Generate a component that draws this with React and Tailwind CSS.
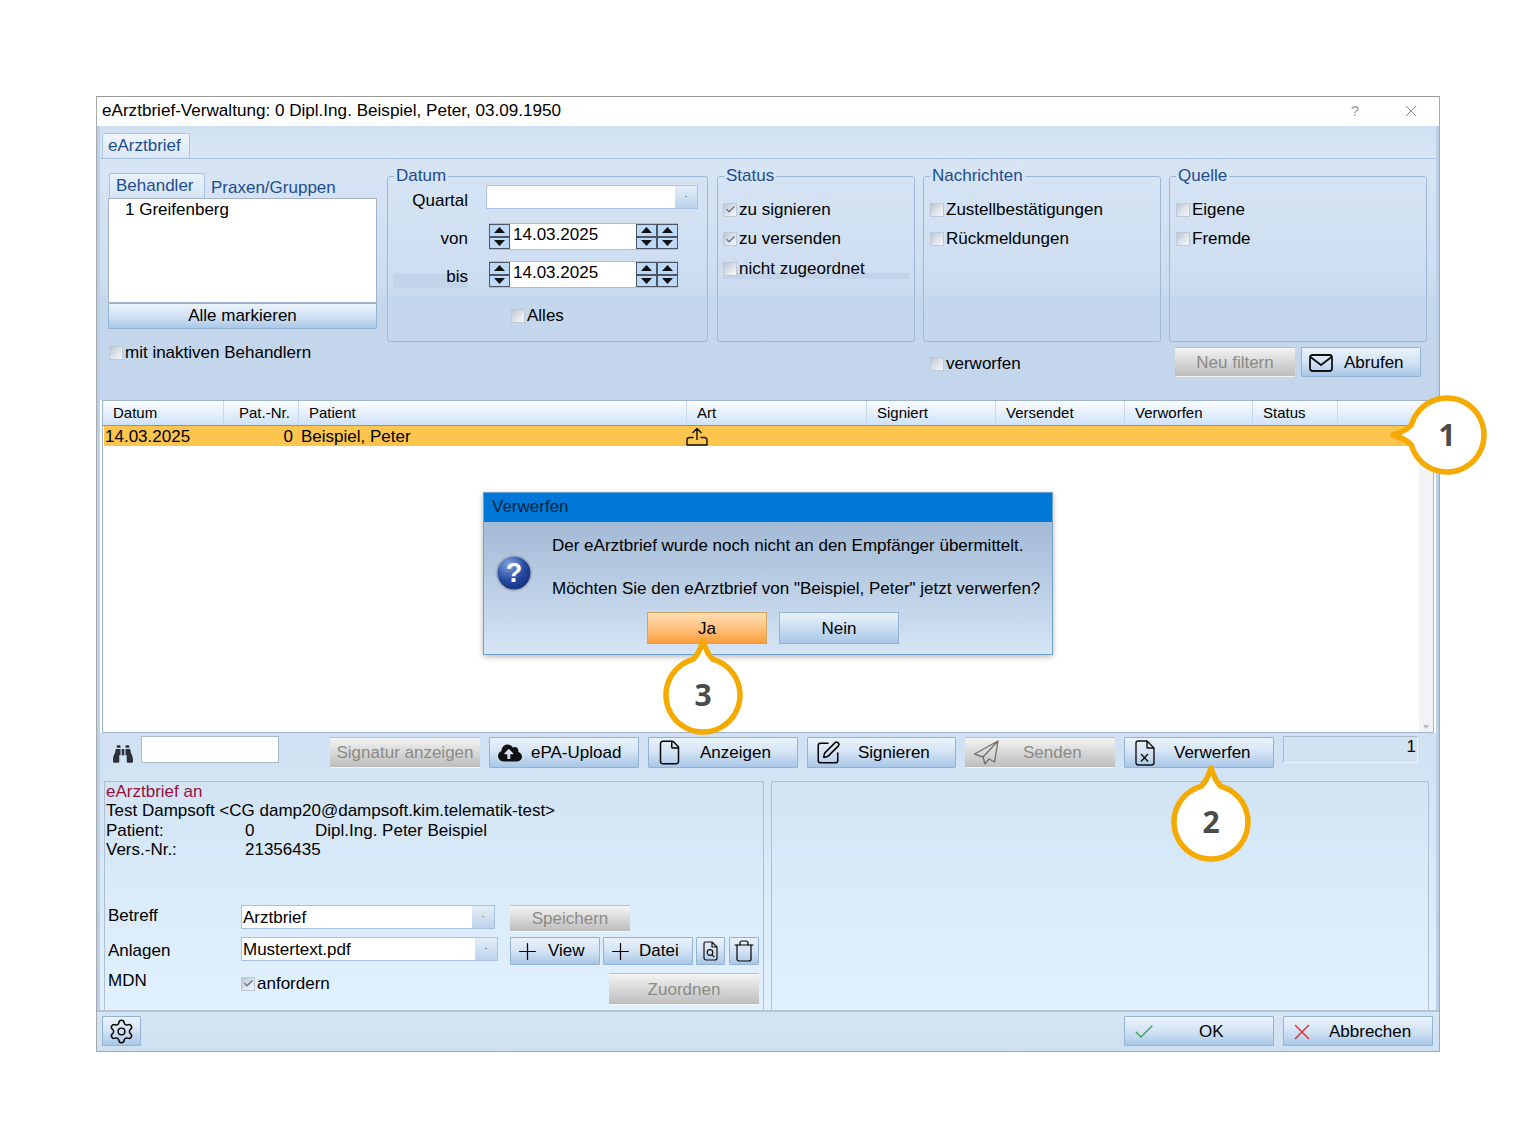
import React from "react";
import { Check, File, Plus, Settings, SquarePen, Trash, X } from "lucide-react";
import { FaBinoculars, FaCloudUploadAlt } from "react-icons/fa";

const Tick = ({ checked }) => (
  <span className="flex h-[14px] w-[14px] shrink-0 items-center justify-center border border-[#bcc9da] bg-gradient-to-br from-[#bcc4d0] via-[#dde2e9] to-[#f7f8fa]">
    {checked && <Check size={11} strokeWidth={3} className="text-[#66768c]" />}
  </span>
);

const CheckRow = ({ label, checked, extra = "" }) => (
  <div className={`flex h-[21px] items-center gap-[2px] ${extra}`}>
    <Tick checked={checked} />
    <span>{label}</span>
  </div>
);

const Btn = ({ children, disabled, className = "" }) => (
  <div
    className={`flex shrink-0 items-center rounded-[1px] border ${
      disabled
        ? "border-transparent bg-gradient-to-b from-[#f4f4f4] to-[#bdbdbd] text-[#8b8b85]"
        : "border-[#93b3d3] bg-gradient-to-b from-[#eaf3fb] via-[#d3e3f4] to-[#a9c7e7] text-black"
    } ${className}`}
  >
    {children}
  </div>
);

const Group = ({ title, className = "", children }) => (
  <fieldset className={`h-[175px] shrink-0 rounded-[3px] border border-[#9db8d9] ${className}`}>
    <legend className="ml-[6px] px-[2px] text-[17px] leading-[18px] text-[#1f4d8f]">{title}</legend>
    {children}
  </fieldset>
);

const Arrow = ({ up }) => (
  <div className="flex flex-1 items-center justify-center border border-[#4d5662] bg-[#bcd9fa]">
    <svg width="11" height="6" viewBox="0 0 11 6">
      <polygon points={up ? "5.5,0 11,6 0,6" : "0,0 11,0 5.5,6"} fill="#111" />
    </svg>
  </div>
);

const Spin = () => (
  <div className="flex h-full w-[21px] shrink-0 flex-col">
    <Arrow up />
    <Arrow />
  </div>
);

const DateField = () => (
  <div className="flex h-[27px] w-[189px] items-stretch border-y border-[#b3bcc8] bg-white">
    <Spin />
    <span className="flex-1 pl-[3px] text-[17px] leading-[22px]">14.03.2025</span>
    <Spin />
    <Spin />
  </div>
);

const Combo = ({ value, className = "" }) => (
  <div className={`flex h-[24px] shrink-0 items-stretch border border-[#a9c3e2] bg-white ${className}`}>
    <span className="flex-1 pl-[1px] leading-[23px]">{value}</span>
    <span className="flex w-[22px] items-center justify-center bg-gradient-to-b from-[#e5eef8] to-[#bcd3ec] pb-[2px] text-[9px] leading-none text-[#333]">·</span>
  </div>
);

const Bubble = ({ n, left, top, rotate = "" }) => (
  <div className="absolute h-[120px] w-[120px]" style={{ left, top }}>
    <svg width="120" height="120" viewBox="-60 -60 120 120" className={rotate}>
      <path
        d="M -10 -35.6 Q -4 -41 0 -54 Q 4 -41 10 -35.6 A 37 37 0 1 1 -10 -35.6 Z"
        fill="#fff"
        stroke="#f5aa00"
        strokeWidth="5.5"
        strokeLinejoin="round"
      />
    </svg>
    <span className="absolute inset-0 -top-[2px] flex items-center justify-center font-['Open_Sans',sans-serif] text-[30px] font-bold text-[#4b4b4b]">
      {n}
    </span>
  </div>
);

const cols = [
  ["Datum", "w-[121px] pl-[10px]"],
  ["Pat.-Nr.", "w-[75px] pl-[15px]"],
  ["Patient", "w-[388px] pl-[10px]"],
  ["Art", "w-[180px] pl-[10px]"],
  ["Signiert", "w-[129px] pl-[10px]"],
  ["Versendet", "w-[129px] pl-[10px]"],
  ["Verworfen", "w-[128px] pl-[10px]"],
  ["Status", "w-[85px] pl-[10px]"],
];

export default function App() {
  return (
    <div className="relative h-[1148px] w-full overflow-hidden bg-white pl-[96px] pt-[96px] font-['Liberation_Sans',Arial,sans-serif] text-[17px] text-black">
      <div className="flex h-[956px] w-[1344px] flex-col border border-[#a5a9ad] border-t-[#9a9a9a]">
        {/* Title bar */}
        <div className="flex h-[29px] shrink-0 items-start bg-white pl-[5px] text-[17.1px] leading-[27px]">
          <span>eArztbrief-Verwaltung: 0 Dipl.Ing. Beispiel, Peter, 03.09.1950</span>
          <span className="ml-auto mr-[42px] text-[15px] text-[#9a9a9a]">?</span>
          <X size={20} strokeWidth={0.9} className="mr-[18px] mt-[4px] text-[#666]" />
        </div>

        {/* Body */}
        <div className="flex min-h-0 flex-1 flex-col">
          <div className="h-[32px] shrink-0 border-x-[3px] border-x-[#bcd1e8] bg-gradient-to-b from-[#cfe0f1] to-[#dae7f5] pl-[2px] pt-[7px]">
            <div className="h-[26px] w-[88px] rounded-t-[2px] border border-b-0 border-[#a9c3e0] bg-gradient-to-b from-[#eef5fc] to-[#d9e7f5] pl-[5px] text-[17px] leading-[24px] text-[#1f4d8f]">
              eArztbrief
            </div>
          </div>

          <div className="flex min-h-0 flex-1 flex-col border-x-[3px] border-x-[#bcd1e8]">
            {/* Filter area */}
            <div className="flex h-[242px] shrink-0 border-t border-[#a9c3e0] bg-[linear-gradient(to_bottom,#d7e5f4_0%,#ccdcf0_56%,#c5d7ed_57%,#c4d6ec_100%)] pl-[8px] pt-[8px]">
              {/* Behandler */}
              <div className="w-[269px] shrink-0 pt-[6px]">
                <div className="flex h-[25px] items-end">
                  <div className="ml-[1px] h-[25px] w-[96px] rounded-t-[2px] border border-b-0 border-[#a9c3e0] bg-gradient-to-b from-[#e9f2fb] to-[#d5e4f4] pl-[6px] leading-[23px] text-[#1f4d8f]">
                    Behandler
                  </div>
                  <div className="ml-[6px] h-[22px] leading-[24px] text-[#1f4d8f]">Praxen/Gruppen</div>
                </div>
                <div className="h-[105px] border border-[#a3b2c6] bg-white pl-[16px] leading-[21px]">1 Greifenberg</div>
                <Btn className="h-[26px] w-full justify-center">Alle markieren</Btn>
                <div className="mt-[13px] flex h-[21px] items-center gap-[2px] pl-[1px]">
                  <Tick />
                  <span>mit inaktiven Behandlern</span>
                </div>
              </div>

              <div className="ml-[10px] w-[1040px] shrink-0">
                <div className="flex">
                  {/* Datum */}
                  <Group title="Datum" className="w-[321px]">
                    <div className="flex h-[24px] items-start">
                      <span className="w-[80px] pt-[5px] text-right leading-[22px]">Quartal</span>
                      <Combo className="ml-[18px] w-[212px]" />
                    </div>
                    <div className="mt-[14px] flex h-[27px]">
                      <span className="w-[80px] pt-[5px] text-right leading-[22px]">von</span>
                      <div className="ml-[21px]">
                        <DateField />
                      </div>
                    </div>
                    <div className="mt-[11px] flex h-[27px]">
                      <span className="ml-[5px] w-[75px] bg-[linear-gradient(to_bottom,transparent_50%,#c3d4ea_50%)] pt-[5px] text-right leading-[22px]">bis</span>
                      <div className="ml-[21px]">
                        <DateField />
                      </div>
                    </div>
                    <CheckRow label="Alles" extra="ml-[123px] mt-[17px]" />
                  </Group>

                  {/* Status */}
                  <Group title="Status" className="ml-[9px] w-[198px]">
                    <div className="flex flex-col gap-[8.5px] pl-[5px] pt-[14px]">
                      <CheckRow label="zu signieren" checked />
                      <CheckRow label="zu versenden" checked />
                      <CheckRow
                        label="nicht zugeordnet"
                        extra="mr-[5px] bg-[linear-gradient(to_bottom,transparent_70%,#c3d4ea_70%)]"
                      />
                    </div>
                  </Group>

                  {/* Nachrichten */}
                  <Group title="Nachrichten" className="ml-[8px] w-[238px]">
                    <div className="flex flex-col gap-[8.5px] pl-[6px] pt-[14px]">
                      <CheckRow label="Zustellbestätigungen" />
                      <CheckRow label="Rückmeldungen" />
                    </div>
                  </Group>

                  {/* Quelle */}
                  <Group title="Quelle" className="ml-[8px] w-[258px]">
                    <div className="flex flex-col gap-[8.5px] pl-[6px] pt-[14px]">
                      <CheckRow label="Eigene" />
                      <CheckRow label="Fremde" />
                    </div>
                  </Group>
                </div>

                <div className="mt-[5px] flex items-start pr-[6px]">
                  <CheckRow label="verworfen" extra="ml-[543px] mt-[6px]" />
                  <Btn disabled className="ml-auto h-[30px] w-[120px] justify-center pt-[1px]">
                    Neu filtern
                  </Btn>
                  <Btn className="ml-[6px] h-[30px] w-[120px] gap-[11px] pl-[7px] pt-[1px]">
                    <svg width="24" height="18" viewBox="0 0 24 18" fill="none" stroke="#111" strokeWidth="1.8">
                      <rect x="1" y="1" width="22" height="16" rx="2.5" />
                      <path d="M1.5 3 L12 11 L22.5 3" />
                    </svg>
                    <span>Abrufen</span>
                  </Btn>
                </div>
              </div>
            </div>

            {/* Table */}
            <div className="mx-[2px] h-[333px] shrink-0 border border-[#9fb4cc] bg-white">
              <div className="flex h-[25px] border-b border-[#8397ad] bg-gradient-to-b from-[#fbfdff] to-[#cfe2f8] text-[15px] leading-[24px]">
                {cols.map(([c, w]) => (
                  <div key={c} className={`${w} shrink-0 border-r border-[#c6d9ee]`}>
                    {c}
                  </div>
                ))}
              </div>
              <div className="relative h-[306px]">
                <div className="ml-[1px] flex h-[20px] bg-[#fcc54e] leading-[22px]">
                  <span className="ml-[1px] w-[138px]">14.03.2025</span>
                  <span className="w-[50px] text-right">0</span>
                  <span className="ml-[8px] w-[385px]">Beispiel, Peter</span>
                  <svg width="22" height="20" viewBox="0 0 22 20" fill="none" stroke="#111" strokeWidth="1.4" strokeLinejoin="round" className="mt-[1px] shrink-0">
                    <path d="M11 13 V1.5 M6.5 6 L11 1.5 L15.5 6 M7.5 10.5 H3.5 A2.5 2.5 0 0 0 1 13 V18 H21 V13 A2.5 2.5 0 0 0 18.5 10.5 H14.5" />
                  </svg>
                </div>
                <div className="absolute bottom-0 right-0 top-[20px] flex w-[14px] items-end justify-center bg-[#f1f3f5] pb-[3px]">
                  <svg width="6" height="4" viewBox="0 0 6 4">
                    <polygon points="0,0 6,0 3,4" fill="#b0bac6" />
                  </svg>
                </div>
              </div>
            </div>

            {/* Lower section */}
            <div className="flex min-h-0 flex-1 flex-col bg-gradient-to-b from-[#cfe1f2] to-[#e1f1fe]">
              <div className="flex h-[48px] shrink-0 items-start pl-[13px] pt-[3px]">
                <FaBinoculars size={20} className="mt-[8px] text-[#2b3038]" />
                <div className="ml-[8px] h-[27px] w-[138px] border border-[#a9b9cc] bg-white" />
                <Btn disabled className="ml-[51px] mt-[1px] h-[31px] w-[150px] justify-center">
                  Signatur anzeigen
                </Btn>
                <Btn className="ml-[9px] mt-[1px] h-[31px] w-[150px] gap-[9px] pl-[8px]">
                  <FaCloudUploadAlt size={24} className="text-[#111]" />
                  <span>ePA-Upload</span>
                </Btn>
                <Btn className="ml-[9px] mt-[1px] h-[31px] w-[150px] gap-[17px] pl-[7px]">
                  <File size={27} strokeWidth={1.3} />
                  <span>Anzeigen</span>
                </Btn>
                <Btn className="ml-[9px] mt-[1px] h-[31px] w-[149px] gap-[17px] pl-[7px]">
                  <SquarePen size={26} strokeWidth={1.4} />
                  <span>Signieren</span>
                </Btn>
                <Btn disabled className="ml-[9px] mt-[1px] h-[31px] w-[150px] gap-[23px] pl-[7px]">
                  <svg width="27" height="27" viewBox="0 0 27 27" fill="none" stroke="#77736c" strokeWidth="1.4" strokeLinejoin="round">
                    <path d="M25 2 L1.5 15 L10 18 L12 25 L16 20 L21.5 23 Z M25 2 L10 18" />
                  </svg>
                  <span>Senden</span>
                </Btn>
                <Btn className="ml-[9px] mt-[1px] h-[31px] w-[150px] gap-[18px] pl-[9px]">
                  <svg width="22" height="26" viewBox="0 0 22 26" fill="none" stroke="#111" strokeWidth="1.4" strokeLinejoin="round">
                    <path d="M4 1 H13 L20 8 V22.5 A2.5 2.5 0 0 1 17.5 25 H4.5 A2.5 2.5 0 0 1 2 22.5 V3 A2 2 0 0 1 4 1 Z M13 1 V8 H20 M7 14 L14 21.5 M14 14 L7 21.5" />
                  </svg>
                  <span>Verwerfen</span>
                </Btn>
                <div className="ml-[9px] h-[27px] w-[135px] border border-[#a9b9cb] border-b-[#e9f2fa] border-r-[#e9f2fa] bg-[#d3e2f1] pr-[1px] text-right text-[17px] leading-[20px]">
                  1
                </div>
              </div>

              <div className="flex min-h-0 flex-1 pl-[4px]">
                <div className="w-[660px] shrink-0 border-x border-t border-[#aebfd2] text-[17px]">
                  <div className="pl-[1px] leading-[19.3px]">
                    <div className="text-[#99103f]">eArztbrief an</div>
                    <div>{"Test Dampsoft <CG damp20@dampsoft.kim.telematik-test>"}</div>
                    <div className="flex">
                      <span className="w-[139px]">Patient:</span>
                      <span className="w-[70px]">0</span>
                      <span>Dipl.Ing. Peter Beispiel</span>
                    </div>
                    <div className="flex">
                      <span className="w-[139px]">Vers.-Nr.:</span>
                      <span>21356435</span>
                    </div>
                  </div>

                  <div className="mt-[46px] flex items-start pl-[3px]">
                    <span className="w-[133px] pt-[1px] leading-[20px]">Betreff</span>
                    <Combo value="Arztbrief" className="w-[254px]" />
                    <Btn disabled className="ml-[15px] h-[27px] w-[120px] justify-center">
                      Speichern
                    </Btn>
                  </div>

                  <div className="mt-[5px] flex items-start pl-[3px]">
                    <span className="w-[133px] pt-[4px] leading-[20px]">Anlagen</span>
                    <Combo value="Mustertext.pdf" className="w-[257px]" />
                    <Btn className="ml-[12px] h-[28px] w-[90px] gap-[7px] pl-[3px]">
                      <Plus size={27} strokeWidth={1.1} />
                      <span>View</span>
                    </Btn>
                    <Btn className="ml-[3px] h-[28px] w-[90px] gap-[5px] pl-[3px]">
                      <Plus size={27} strokeWidth={1.1} />
                      <span>Datei</span>
                    </Btn>
                    <Btn className="ml-[3px] h-[28px] w-[29px] justify-center">
                      <svg width="15" height="20" viewBox="0 0 15 20" fill="none" stroke="#111" strokeWidth="1.2" strokeLinejoin="round">
                        <path d="M2.5 1 H9 L14 6 V17 A2 2 0 0 1 12 19 H3 A2 2 0 0 1 1 17 V2.5 A1.5 1.5 0 0 1 2.5 1 Z M9 1 V6 H14" />
                        <circle cx="7" cy="11.5" r="2.8" />
                        <path d="M9 13.8 L11.3 16.2" />
                      </svg>
                    </Btn>
                    <Btn className="ml-[4px] h-[28px] w-[30px] justify-center">
                      <Trash size={24} strokeWidth={1.2} />
                    </Btn>
                  </div>

                  <div className="mt-[8px] flex items-start pl-[3px] pr-[4px]">
                    <span className="w-[133px] leading-[16px]">MDN</span>
                    <div className="flex h-[21px] items-center gap-[2px]">
                      <Tick checked />
                      <span>anfordern</span>
                    </div>
                    <Btn disabled className="ml-auto h-[32px] w-[150px] justify-center pt-[2px]">
                      Zuordnen
                    </Btn>
                  </div>
                </div>
                <div className="ml-[7px] w-[658px] shrink-0 border-x border-t border-[#aebfd2]" />
              </div>
            </div>
          </div>

          {/* Footer */}
          <div className="flex h-[41px] shrink-0 items-start border-t-2 border-[#b4c4d4] bg-gradient-to-b from-[#d6e5f4] to-[#cfe0f1] pl-[5px] pr-[6px] pt-[4px]">
            <Btn className="h-[30px] w-[39px] justify-center">
              <Settings size={27} strokeWidth={1.3} />
            </Btn>
            <Btn className="ml-auto h-[30px] w-[150px] pl-[7px] pt-[1px]">
              <Check size={24} strokeWidth={1.1} className="text-[#2f9a4a]" />
              <span className="ml-[43px]">OK</span>
            </Btn>
            <Btn className="ml-[9px] h-[30px] w-[150px] gap-[14px] pl-[5px] pt-[1px]">
              <X size={26} strokeWidth={1.2} className="text-[#e0202a]" />
              <span>Abbrechen</span>
            </Btn>
          </div>
        </div>
      </div>

      {/* Dialog */}
      <div className="absolute left-[483px] top-[492px] flex h-[163px] w-[570px] flex-col border border-[#6f9dcc] shadow-[0_2px_6px_rgba(0,0,0,0.28)]">
        <div className="h-[29px] shrink-0 bg-[#0078d7] pl-[8px] leading-[28px] text-[#06233f]">Verwerfen</div>
        <div className="relative flex-1 bg-gradient-to-b from-[#a3b9d5] to-[#d4e5f5] pl-[68px] pt-[13px]">
          <div className="leading-[22px]">Der eArztbrief wurde noch nicht an den Empfänger übermittelt.</div>
          <div className="mt-[21px] leading-[22px]">Möchten Sie den eArztbrief von "Beispiel, Peter" jetzt verwerfen?</div>
          <svg width="38" height="38" viewBox="0 0 38 38" className="absolute left-[11px] top-[32px]">
            <defs>
              <radialGradient id="q" cx="35%" cy="25%" r="80%">
                <stop offset="0%" stopColor="#7ea2e0" />
                <stop offset="60%" stopColor="#23489e" />
                <stop offset="100%" stopColor="#16307a" />
              </radialGradient>
            </defs>
            <circle cx="19" cy="19" r="17.5" fill="url(#q)" stroke="#aab4c4" strokeWidth="2" />
            <text x="19" y="28" textAnchor="middle" fontSize="27" fontWeight="700" fill="#fff" fontFamily="Liberation Sans, sans-serif">
              ?
            </text>
          </svg>
          <div className="absolute left-[163px] top-[90px] flex gap-[12px]">
            <div className="flex h-[32px] w-[120px] items-center justify-center border border-[#d7a25e] bg-gradient-to-b from-[#fde0b4] to-[#fb9f3a] pt-[1px]">
              Ja
            </div>
            <div className="flex h-[32px] w-[120px] items-center justify-center border border-[#93b3d3] bg-gradient-to-b from-[#eaf3fb] to-[#a9c7e7] pt-[1px]">
              Nein
            </div>
          </div>
        </div>
      </div>

      <Bubble n="1" left={1387} top={375} rotate="-rotate-90" />
      <Bubble n="2" left={1151} top={762} />
      <Bubble n="3" left={643} top={635} />
    </div>
  );
}
